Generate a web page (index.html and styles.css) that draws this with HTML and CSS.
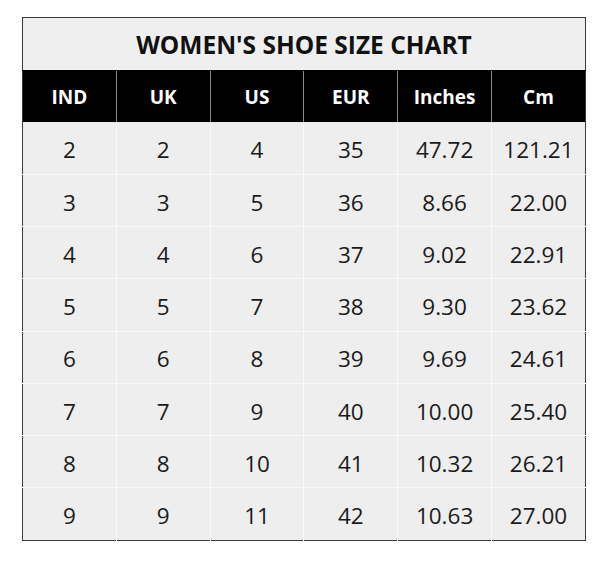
FILE: index.html
```html
<!DOCTYPE html>
<html>
<head>
<meta charset="utf-8">
<link rel="stylesheet" href="styles.css">
</head>
<body>
<div class="page">
<table class="chart">
  <thead>
    <tr><th class="title" colspan="6">WOMEN'S SHOE SIZE CHART</th></tr>
    <tr class="head">
      <th>IND</th><th>UK</th><th>US</th><th>EUR</th><th>Inches</th><th>Cm</th>
    </tr>
  </thead>
  <tbody>
    <tr><td>2</td><td>2</td><td>4</td><td>35</td><td>47.72</td><td>121.21</td></tr>
    <tr><td>3</td><td>3</td><td>5</td><td>36</td><td>8.66</td><td>22.00</td></tr>
    <tr><td>4</td><td>4</td><td>6</td><td>37</td><td>9.02</td><td>22.91</td></tr>
    <tr><td>5</td><td>5</td><td>7</td><td>38</td><td>9.30</td><td>23.62</td></tr>
    <tr><td>6</td><td>6</td><td>8</td><td>39</td><td>9.69</td><td>24.61</td></tr>
    <tr><td>7</td><td>7</td><td>9</td><td>40</td><td>10.00</td><td>25.40</td></tr>
    <tr><td>8</td><td>8</td><td>10</td><td>41</td><td>10.32</td><td>26.21</td></tr>
    <tr><td>9</td><td>9</td><td>11</td><td>42</td><td>10.63</td><td>27.00</td></tr>
  </tbody>
</table>
</div>
</body>
</html>
```
FILE: styles.css
```css
html, body {
  margin: 0;
  padding: 0;
  background: #ffffff;
}
.page {
  padding: 17px 0 0 22px;
}
.chart {
  border-collapse: collapse;
  table-layout: fixed;
  width: 564px;
  border: 1px solid #3a3a3a;
  font-family: "Open Sans", "Liberation Sans", sans-serif;
  color: #1a1a1a;
  background: #eeeeee;
}
.chart th, .chart td {
  width: 94px;
  padding: 0;
  text-align: center;
  vertical-align: middle;
}
.title {
  height: 52px;
  font-size: 24.5px;
  font-weight: 700;
  color: #111111;
  background: #efefef;
  border-bottom: 1px solid #000;
}
.head th {
  height: 51px;
  background: #000000;
  color: #ffffff;
  font-size: 19px;
  font-weight: 700;
  border-left: 1px solid #8a8a8a;
}
.head th:first-child {
  border-left: none;
}
.chart td {
  height: 52.25px;
  box-sizing: border-box;
  padding-top: 5px;
  font-size: 22.5px;
  font-weight: 400;
  line-height: 1;
  border-left: 1px solid #f9f9f9;
  border-top: 1px solid #f9f9f9;
}
.chart td:first-child {
  border-left: none;
}
.chart tbody tr:first-child td {
  border-top: none;
}
```
